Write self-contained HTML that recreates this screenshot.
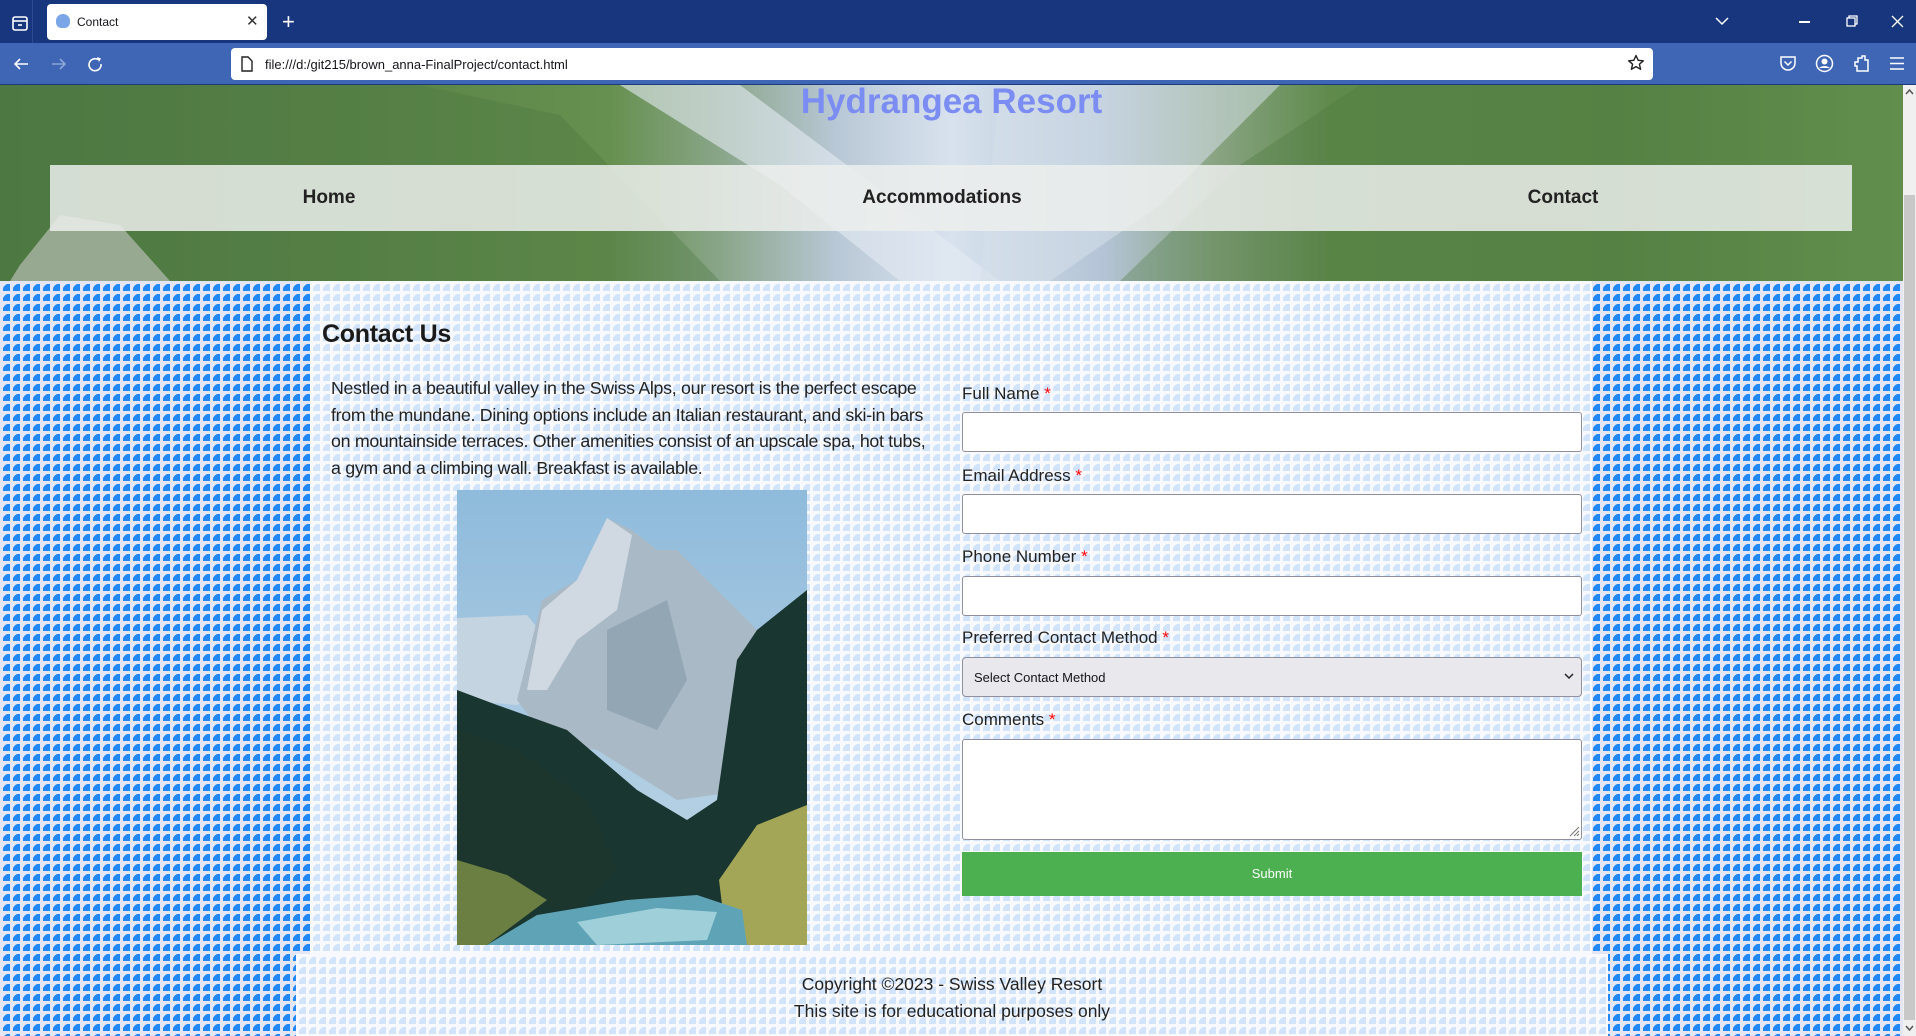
<!DOCTYPE html>
<html><head><meta charset="utf-8"><style>
*{margin:0;padding:0;box-sizing:border-box}
body{width:1916px;height:1036px;overflow:hidden;position:relative;font-family:"Liberation Sans",sans-serif;background:#e4e6f6}
.abs{position:absolute}
.outer{left:0;top:281px;width:1903px;height:755px;background-color:#e4e6f6;
background-image:linear-gradient(to right,#e4e6f6 0 3px,transparent 3px),linear-gradient(to bottom,#e4e6f6 0 3px,transparent 3px),radial-gradient(circle at 100% 100%,#2288f8 0 7.3px,transparent 7.8px);
background-size:10px 10px;background-position:0 0}
.inner{background-color:#f8f9fd;
background-image:linear-gradient(to right,#f8f9fd 0 3px,transparent 3px),linear-gradient(to bottom,#f8f9fd 0 3px,transparent 3px),radial-gradient(circle at 100% 100%,#d2e4fb 0 7.3px,transparent 7.8px);
background-size:10px 10px;background-position:0 0}
.lbl{position:absolute;left:962px;font-size:17px;color:#222}
.lbl span{color:#f00}
.inp{position:absolute;left:962px;width:620px;background:#fff;border:1px solid #8f8f9d;border-radius:3px}
</style></head><body>
<div class="abs" style="left:0;top:0;width:1916px;height:43px;background:#17367d"></div>
<svg class="abs" style="left:10px;top:12px" width="22" height="22" viewBox="0 0 22 22"><rect x="3" y="5" width="14" height="13" rx="2" fill="none" stroke="#fff" stroke-width="1.6"/><line x1="3" y1="9" x2="17" y2="9" stroke="#fff" stroke-width="1.6"/><line x1="8" y1="13" x2="12" y2="13" stroke="#fff" stroke-width="1.6"/></svg>
<div class="abs" style="left:32px;top:0;width:1px;height:43px;background:#2d4b90"></div>
<div class="abs" style="left:47px;top:4px;width:220px;height:36px;background:#fff;border-radius:4px"></div>
<div class="abs" style="left:56px;top:14px;width:14px;height:14px;border-radius:50% 50% 40% 40%;background:#7aa6e8"></div>
<div class="abs" style="left:77px;top:15px;font-size:12px;color:#15141a">Contact</div>
<div class="abs" style="left:246px;top:12px;font-size:15px;color:#333">✕</div>
<div class="abs" style="left:282px;top:9px;font-size:22px;color:#fff">+</div>
<svg class="abs" style="left:1715px;top:16px" width="14" height="10"><polyline points="1,2 7,8 13,2" fill="none" stroke="#fff" stroke-width="1.5"/></svg>
<div class="abs" style="left:1799px;top:21px;width:11px;height:1.5px;background:#fff"></div>
<svg class="abs" style="left:1846px;top:15px" width="13" height="13"><rect x="1" y="3" width="8" height="8" fill="none" stroke="#fff" stroke-width="1.3"/><polyline points="3,3 3,1 11,1 11,9 9,9" fill="none" stroke="#fff" stroke-width="1.3"/></svg>
<svg class="abs" style="left:1891px;top:15px" width="13" height="13"><path d="M1 1L12 12M12 1L1 12" stroke="#fff" stroke-width="1.3"/></svg>
<div class="abs" style="left:0;top:43px;width:1916px;height:41px;background:#3e66b5"></div>
<div class="abs" style="left:0;top:84px;width:1916px;height:1px;background:#1e3a78"></div>
<svg class="abs" style="left:12px;top:56px" width="18" height="16"><path d="M16 8H3M8 3L3 8L8 13" fill="none" stroke="#fff" stroke-width="1.6"/></svg>
<svg class="abs" style="left:50px;top:56px" width="18" height="16"><path d="M2 8H15M10 3L15 8L10 13" fill="none" stroke="#8ea6d8" stroke-width="1.6"/></svg>
<svg class="abs" style="left:87px;top:56px" width="18" height="18"><path d="M14 8A6 6 0 1 1 11 3.5" fill="none" stroke="#fff" stroke-width="1.6"/><path d="M10 1L14 2.5L12 6Z" fill="#fff"/></svg>
<div class="abs" style="left:231px;top:48px;width:1422px;height:32px;background:#fff;border-radius:4px"></div>
<svg class="abs" style="left:240px;top:56px" width="14" height="16"><path d="M2 1H8L12 5V15H2Z" fill="none" stroke="#222" stroke-width="1.4"/></svg>
<div class="abs" style="left:265px;top:57px;font-size:13px;color:#15141a">file:///d:/git215/brown_anna-FinalProject/contact.html</div>
<svg class="abs" style="left:1627px;top:54px" width="18" height="18" viewBox="0 0 18 18"><path d="M9 1.5L11.2 6.3L16.3 6.8L12.4 10.2L13.6 15.3L9 12.6L4.4 15.3L5.6 10.2L1.7 6.8L6.8 6.3Z" fill="none" stroke="#222" stroke-width="1.4" stroke-linejoin="round"/></svg>
<svg class="abs" style="left:1779px;top:55px" width="18" height="17"><path d="M2 2H16V8A7 7 0 0 1 2 8Z" fill="none" stroke="#fff" stroke-width="1.5"/><polyline points="5.5,6.5 9,10 12.5,6.5" fill="none" stroke="#fff" stroke-width="1.5"/></svg>
<svg class="abs" style="left:1815px;top:54px" width="19" height="19"><circle cx="9.5" cy="9.5" r="8" fill="none" stroke="#fff" stroke-width="1.5"/><circle cx="9.5" cy="7.5" r="3" fill="#fff"/><path d="M4 14Q9.5 10 15 14" fill="#fff"/></svg>
<svg class="abs" style="left:1853px;top:54px" width="18" height="19"><path d="M2 8H5V4H9V2H12V6H15V17H4V12H2Z" fill="none" stroke="#fff" stroke-width="1.5"/></svg>
<svg class="abs" style="left:1890px;top:57px" width="14" height="13"><path d="M0 1H14M0 6.5H14M0 12H14" stroke="#fff" stroke-width="1.5"/></svg>
<!-- header -->
<div class="abs" style="left:0;top:85px;width:1903px;height:196px;overflow:hidden;background:linear-gradient(90deg,#4f7a43 0%,#5b8549 20%,#66904f 32%,#8aa68a 38%,#b9c8d6 44%,#d8e2ee 50%,#b4c4d6 58%,#88a381 64%,#5e8a4b 70%,#5a8748 85%,#6d9a55 100%)">
<svg width="1903" height="196" style="position:absolute;left:0;top:0">
<polygon points="620,0 740,0 900,120 1000,196 900,196 780,100" fill="#e4ebf3" opacity=".6"/>
<polygon points="1000,0 1280,0 1160,120 1050,196 980,196" fill="#d6e0ea" opacity=".55"/>
<polygon points="0,196 0,0 200,0 420,0 560,30 720,196" fill="#4a763f" opacity=".35"/>
<polygon points="1120,196 1240,80 1360,0 1903,0 1903,196" fill="#4c783f" opacity=".35"/>
<polygon points="20,180 60,130 120,140 170,196 10,196" fill="#b6bdb2" opacity=".7"/>
</svg>
</div>
<div class="abs" style="left:0;top:82px;width:1903px;text-align:center;font-size:35px;font-weight:bold;color:#7b8cf2">Hydrangea Resort</div>
<div class="abs" style="left:50px;top:165px;width:1802px;height:66px;background:rgba(236,238,236,.85)"></div>
<div class="abs" style="left:229px;top:187px;width:200px;text-align:center;font-size:19px;font-weight:bold;color:#222">Home</div>
<div class="abs" style="left:842px;top:187px;width:200px;text-align:center;font-size:19px;font-weight:bold;color:#222">Accommodations</div>
<div class="abs" style="left:1463px;top:187px;width:200px;text-align:center;font-size:19px;font-weight:bold;color:#222">Contact</div>
<div class="abs" style="left:1903px;top:85px;width:13px;height:951px;background:#f0f0f0"></div>
<div class="abs" style="left:1904px;top:195px;width:11px;height:825px;background:#c8c8c8"></div>
<svg class="abs" style="left:1905px;top:89px" width="9" height="6"><polyline points="1,5 4.5,1 8,5" fill="none" stroke="#555" stroke-width="1.5"/></svg>
<svg class="abs" style="left:1905px;top:1025px" width="9" height="6"><polyline points="1,1 4.5,5 8,1" fill="none" stroke="#555" stroke-width="1.5"/></svg>
<div class="abs outer"></div>
<div class="abs inner" style="left:310px;top:281px;width:1282px;height:673px"></div>
<div class="abs inner" style="left:296px;top:954px;width:1312px;height:82px"></div>
<div class="abs" style="left:322px;top:320px;font-size:25px;font-weight:bold;color:#1a1a1a;letter-spacing:-.3px">Contact Us</div>
<div class="abs" style="left:331px;top:375px;font-size:17.8px;line-height:26.5px;color:#222;white-space:nowrap;letter-spacing:-.3px">Nestled in a beautiful valley in the Swiss Alps, our resort is the perfect escape<br>from the mundane. Dining options include an Italian restaurant, and ski-in bars<br>on mountainside terraces. Other amenities consist of an upscale spa, hot tubs,<br>a gym and a climbing wall. Breakfast is available.</div>
<svg class="abs" style="left:457px;top:490px" width="350" height="455" viewBox="0 0 350 455">
<defs><linearGradient id="sky" x1="0" y1="0" x2="0" y2="1"><stop offset="0" stop-color="#8fbbdc"/><stop offset="1" stop-color="#c2d8e6"/></linearGradient></defs>
<rect width="350" height="455" fill="url(#sky)"/>
<polygon points="0,128 70,125 90,150 100,200 60,215 0,210" fill="#c4d4e0"/>
<polygon points="60,210 85,110 120,90 150,28 175,40 200,60 220,60 300,140 290,300 220,310 140,260 90,250" fill="#aab9c6"/>
<polygon points="85,120 120,90 150,28 175,45 160,120 120,150 90,200 70,200" fill="#d0d9e2"/>
<polygon points="150,140 210,110 230,190 200,240 150,220" fill="#93a6b4"/>
<polygon points="0,200 40,215 110,240 180,300 230,330 260,310 280,170 300,140 350,100 350,455 0,455" fill="#1a3630"/>
<polygon points="0,240 60,260 130,310 160,380 120,420 0,410" fill="#1c362d"/>
<polygon points="0,370 50,385 90,410 30,455 0,455" fill="#6c7f42"/>
<polygon points="270,455 262,390 300,335 350,315 350,455" fill="#a4a657"/>
<polygon points="30,455 80,425 170,410 240,405 285,420 290,455" fill="#5ea3b6"/>
<polygon points="120,432 200,418 260,422 250,450 140,455" fill="#9fcfd8"/>
</svg>
<div class="lbl" style="top:384px">Full Name <span>*</span></div>
<div class="inp" style="top:412px;height:40px"></div>
<div class="lbl" style="top:466px">Email Address <span>*</span></div>
<div class="inp" style="top:494px;height:40px"></div>
<div class="lbl" style="top:547px">Phone Number <span>*</span></div>
<div class="inp" style="top:576px;height:40px"></div>
<div class="lbl" style="top:628px">Preferred Contact Method <span>*</span></div>
<div class="inp" style="top:657px;height:40px;background:#e9e8ed;border-radius:4px"></div>
<div class="abs" style="left:974px;top:670px;font-size:13px;color:#15141a">Select Contact Method</div>
<svg class="abs" style="left:1564px;top:673px" width="10" height="7"><polyline points="1,1 5,5 9,1" fill="none" stroke="#222" stroke-width="1.5"/></svg>
<div class="lbl" style="top:710px">Comments <span>*</span></div>
<div class="inp" style="top:739px;height:101px"></div>
<svg class="abs" style="left:1568px;top:825px" width="12" height="12"><path d="M11 2L2 11M11 6L6 11M11 9L9 11" stroke="#777" stroke-width="1"/></svg>
<div class="abs" style="left:962px;top:852px;width:620px;height:44px;background:#4caf50;color:#fff;font-size:13px;text-align:center;line-height:44px">Submit</div>
<div class="abs" style="left:296px;top:971px;width:1312px;text-align:center;font-size:17.5px;line-height:27px;color:#222">Copyright ©2023 - Swiss Valley Resort<br>This site is for educational purposes only</div>
</body></html>
